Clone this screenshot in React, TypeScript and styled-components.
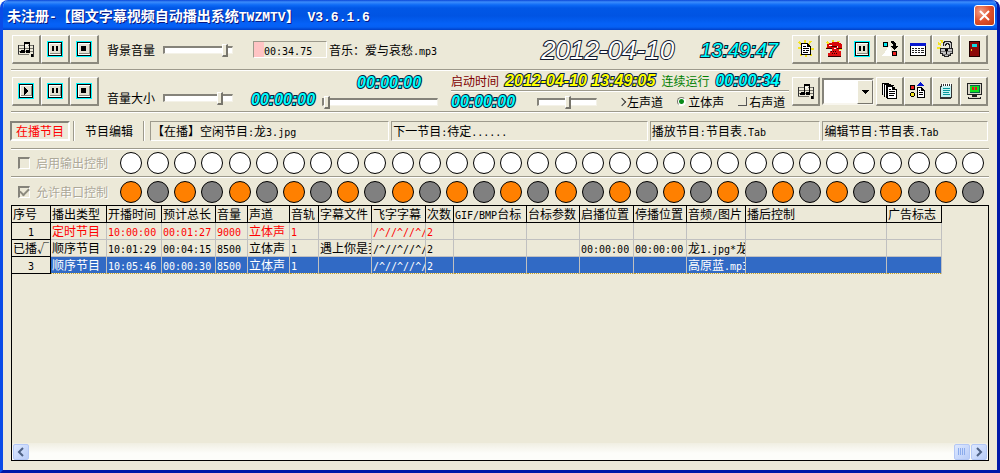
import React from "react";
import styled, { createGlobalStyle, css } from "styled-components";

const face = "#ece9d8";
const shade = "#9d9a8c";

const Global = createGlobalStyle`
  * { box-sizing: border-box; }
  html, body { margin: 0; padding: 0; background: #fff; }
  body, button, select, input, table {
    font-family: "Noto Sans CJK SC", sans-serif;
    font-size: 12px;
    line-height: 16px;
    color: #000;
  }
`;

/* ---------- window frame ---------- */

const Window = styled.div`
  min-height: 100vh;
  display: flex;
  flex-direction: column;
  overflow: hidden;
  background: ${face};
  border: solid #0a3fe0;
  border-width: 0 3px 3px;
  border-color: #0a3fe0 #0019a8 #0019a8 #0a4be8;
  border-radius: 8px 8px 0 0;
`;

const TitleBar = styled.header`
  height: 30px;
  flex: none;
  margin: 0 -3px;
  padding: 0 5px 0 7px;
  display: flex;
  align-items: center;
  justify-content: space-between;
  background: linear-gradient(
    #0a46d8 0, #3b8cfb 2px, #0d6af6 5px, #0157e6 8px, #0054e3 16px, #0562f8 24px, #0560f4 27px, #0040c8 30px
  );
`;

const Title = styled.h1`
  margin: 0;
  font-size: 14px;
  line-height: 20px;
  font-weight: 700;
  color: #fff;
  text-shadow: 1px 1px 0 #0a1883;
  white-space: pre;
`;

const CloseButton = styled.button`
  width: 21px;
  height: 21px;
  padding: 0;
  display: grid;
  place-items: center;
  border: 1px solid #fff;
  border-radius: 3px;
  background: radial-gradient(circle at 30% 30%, #f0a088, #e0502c 50%, #c03a14);
`;

const Client = styled.main`
  flex: 1;
  display: flex;
  flex-direction: column;
  padding: 0 8px 9px;
`;

/* ---------- shared parts ---------- */

const Latin = styled.span<{ $size: number }>`
  font-family: "DejaVu Sans Mono", monospace;
  font-size: ${(p) => p.$size}px;
  line-height: 0;
`;

const TitleLatin = styled(Latin)`
  font-family: "Liberation Mono", monospace;
`;

/* Sets half-width runs in a monospaced face, half as wide as a Chinese character. */
function Mixed({ text }: { text: string }) {
  const runs = text.split(/([\x20-\x7e]+)/).filter(Boolean);
  return (
    <>
      {runs.map((run, i) =>
        /^[\x20-\x7e]/.test(run) ? <Latin key={i} $size={10}>{run}</Latin> : run
      )}
    </>
  );
}

const Bar = styled.section<{ $height: number }>`
  height: ${(p) => p.$height}px;
  flex: none;
  display: flex;
  align-items: center;
  padding: 0 1px;
  white-space: nowrap;
`;

const Divider = styled.hr`
  flex: none;
  height: 2px;
  margin: 0;
  border: 0;
  border-top: 1px solid ${shade};
  border-bottom: 1px solid #fff;
`;

const Spacer = styled.div`
  flex: 1;
`;

const Buttons = styled.div`
  display: flex;
  align-items: center;
  flex: none;
`;

const ToolButton = styled.button<{ $width?: number }>`
  width: ${(p) => p.$width ?? 28}px;
  height: 29px;
  padding: 0;
  display: grid;
  place-items: center;
  background: ${face};
  border: solid;
  border-width: 1px 2px 2px 1px;
  border-color: #fff #8c8a7e #8c8a7e #fff;
`;

const Slider = styled.input.attrs({ type: "range" })<{ $width: number }>`
  appearance: none;
  flex: none;
  width: ${(p) => p.$width}px;
  height: 14px;
  margin: 0;
  background: transparent;
  &::-webkit-slider-runnable-track {
    height: 8px;
    background: #fff;
    border: 1px solid;
    border-width: 2px 1px 1px 2px;
    border-color: #85837a #f4f2e8 #f4f2e8 #85837a;
  }
  &::-webkit-slider-thumb {
    appearance: none;
    width: 6px;
    height: 13px;
    margin-top: -4px;
    background: ${face};
    border: solid;
    border-width: 1px 2px 2px 1px;
    border-color: #fff #77756c #77756c #fff;
  }
`;

const SliderLabel = styled.label<{ $drop?: boolean }>`
  display: flex;
  align-items: center;
  gap: 8px;
  margin-left: 8px;
  padding-top: ${(p) => (p.$drop ? 14 : 0)}px;
`;

const Clock = styled.output<{ $color?: string }>`
  font: italic 700 16px/18px "Liberation Sans", sans-serif;
  color: ${(p) => p.$color ?? "#00ffff"};
  -webkit-text-stroke: 2px #06203c;
  paint-order: stroke fill;
`;

/* ---------- top bar ---------- */

const Countdown = styled.div`
  width: 74px;
  height: 17px;
  flex: none;
  margin: 0 2px 0 20px;
  padding-left: 10px;
  line-height: 15px;
  border: 1px solid;
  border-color: ${shade} #fff #fff ${shade};
  background: linear-gradient(#ffc4c4, #ffc4c4) 0 0 / 10px 100% no-repeat;
`;

const BigDate = styled.time<{ $cyan?: boolean }>`
  font: italic 400 ${(p) => (p.$cyan ? 20 : 26)}px/30px "Liberation Sans", sans-serif;
  color: ${(p) => (p.$cyan ? "#00ffff" : "#fff")};
  -webkit-text-stroke: 2px #10182c;
  paint-order: stroke fill;
  white-space: pre;
  margin-right: ${(p) => (p.$cyan ? 14 : 26)}px;
`;

/* ---------- second bar ---------- */

const Elapsed = styled.div`
  margin-left: 18px;
  padding-top: 18px;
`;

const Position = styled.div`
  width: 116px;
  margin-left: 7px;
  display: flex;
  flex-direction: column;
  align-items: flex-end;
  gap: 3px;
  & > output { margin-right: 17px; }
`;

const Status = styled.div`
  flex: 1;
  margin: 0 3px 0 13px;
`;

const StatusLine = styled.div<{ $gap: number }>`
  height: 19px;
  display: flex;
  align-items: center;
  gap: ${(p) => p.$gap}px;
`;

const Tag = styled.span<{ $color: string }>`
  color: ${(p) => p.$color};
`;

const Channels = styled.fieldset`
  margin: 0;
  padding: 0;
  border: 0;
  display: flex;
  gap: 14px;
`;

const Channel = styled.label`
  display: flex;
  align-items: center;
  gap: 2px;
`;

const ChannelInput = styled.input.attrs({ type: "radio" })<{ $kind: "chevron" | "dot" | "corner" }>`
  appearance: none;
  margin: 0;
  flex: none;
  ${(p) =>
    p.$kind === "chevron" &&
    css`
      width: 6px;
      height: 6px;
      border: solid #333;
      border-width: 1px 1px 0 0;
      transform: rotate(45deg);
    `}
  ${(p) =>
    p.$kind === "dot" &&
    css`
      width: 9px;
      height: 9px;
      border-radius: 50%;
      border: 1px solid;
      border-color: #77756c #fff #fff #77756c;
      background: radial-gradient(circle, #0a8a1a 0 2px, #fff 3px);
    `}
  ${(p) =>
    p.$kind === "corner" &&
    css`
      width: 9px;
      height: 9px;
      border: solid #555;
      border-width: 0 1px 1px 0;
    `}
`;

const Combo = styled.div`
  position: relative;
  width: 52px;
  height: 27px;
  margin: 0 2px;
`;

const ComboSelect = styled.select`
  appearance: none;
  width: 100%;
  height: 100%;
  background: #fff;
  border: 2px solid;
  border-color: #85837a #f8f6ee #f8f6ee #85837a;
  border-radius: 0;
`;

const ComboArrow = styled.span`
  position: absolute;
  top: 2px;
  right: 1px;
  bottom: 1px;
  width: 16px;
  display: grid;
  place-items: center;
  pointer-events: none;
  background: ${face};
  border: 1px solid;
  border-color: #fff #77756c #77756c #fff;
`;

/* ---------- tabs and info fields ---------- */

const Tab = styled.button<{ $active?: boolean }>`
  height: 20px;
  padding: 0 5px;
  line-height: 16px;
  background: none;
  flex: none;
  border: 2px solid transparent;
  ${(p) =>
    p.$active &&
    css`
      margin-left: -2px;
      padding: 0 4px;
      color: #f00;
      border-color: #85837a #fff #fff #85837a;
    `}
`;

const TabRule = styled.span`
  width: 2px;
  height: 20px;
  margin: 0 3px;
  flex: none;
  border-left: 1px solid ${shade};
  border-right: 1px solid #fff;
`;

const Field = styled.div<{ $grow: number }>`
  flex: ${(p) => p.$grow} 1 0;
  min-width: 0;
  height: 20px;
  margin-left: 2px;
  padding: 0 1px;
  line-height: 18px;
  overflow: hidden;
  border: 1px solid;
  border-color: ${shade} #fff #fff ${shade};
`;

/* ---------- lamps ---------- */

const LampSwitch = styled.label`
  width: 102px;
  flex: none;
  margin-left: 6px;
  display: flex;
  align-items: center;
  gap: 6px;
  color: #aca899;
  text-shadow: 1px 1px 0 #fff;
`;

const LampCheck = styled.input.attrs({ type: "checkbox" })`
  appearance: none;
  flex: none;
  width: 12px;
  height: 12px;
  margin: 0;
  display: grid;
  place-items: center;
  border: 2px solid;
  border-width: 2px 1px 1px 2px;
  border-color: #85837a #fff #fff #85837a;
  &:checked::after {
    content: "";
    width: 7px;
    height: 4px;
    margin-top: -2px;
    border: solid #8c8a7e;
    border-width: 0 0 2px 2px;
    transform: rotate(-45deg);
  }
`;

const Lamps = styled.div`
  flex: 1;
  display: flex;
  justify-content: space-between;
  padding-right: 4px;
`;

const Lamp = styled.i<{ $color: string }>`
  width: 22px;
  height: 22px;
  border-radius: 50%;
  border: 1px solid #000;
  background: ${(p) => p.$color};
`;

/* ---------- grid ---------- */

const GridPanel = styled.section`
  flex: 1;
  min-height: 120px;
  display: flex;
  flex-direction: column;
  justify-content: space-between;
  overflow: hidden;
  border: 1px solid #000;
`;

const Grid = styled.table`
  table-layout: fixed;
  width: 930px;
  margin: -1px 0 0 -1px;
  border-collapse: collapse;
`;

const cell = css`
  height: 17px;
  padding: 0 0 0 1px;
  line-height: 16px;
  font-weight: 400;
  text-align: left;
  white-space: nowrap;
  overflow: hidden;
`;

const HeadCell = styled.th`
  ${cell}
  border: 1px solid #000;
`;

const RowHead = styled.th`
  ${cell}
  padding: 0;
  border: 1px solid #000;
  text-align: center;
`;

const Cell = styled.td`
  ${cell}
  border: 1px solid #c0c0c0;
`;

const Row = styled.tr<{ $tone?: "red" | "selected" }>`
  ${(p) => p.$tone === "red" && css`${Cell} { color: #f00; }`}
  ${(p) =>
    p.$tone === "selected" &&
    css`
      ${Cell} {
        color: #fff;
        background: #316ac5;
        border-top: 1px dotted #101830;
        border-bottom: 1px dotted #c8a020;
      }
    `}
`;

const ScrollBar = styled.div`
  height: 17px;
  flex: none;
  display: flex;
  align-items: center;
  padding: 0 1px;
  gap: 1px;
  background: linear-gradient(#f0eee2, #fdfdfa 60%);
`;

const ScrollButton = styled.button`
  width: 16px;
  height: 16px;
  padding: 0;
  display: grid;
  place-items: center;
  border: 1px solid #b4c8f6;
  border-radius: 2px;
  background: linear-gradient(135deg, #dde8ff, #b8ccf8);
`;

/* ---------- icons ---------- */

const Svg = ({ w = 18, h = 18, children }: { w?: number; h?: number; children: React.ReactNode }) => (
  <svg width={w} height={h} viewBox={`0 0 ${w} ${h}`} shapeRendering="crispEdges" aria-hidden="true">
    {children}
  </svg>
);

const MusicIcon = () => (
  <Svg>
    <path d="M1 5h16v1H1zM1 8h16v1H1zM1 11h16v1H1zM1 14h11v1H1z" fill="#77756c" />
    <path d="M1 5h1v9H1zM16 5h1v12h-1z" fill="#333" />
    <path d="M7 2h6v2H7zM7 3h1v8H7zM12 3h1v8h-1zM4 10h4v3H4zM9 10h4v3H9zM14 14h2v3h-2zM3 11h1v2H3z" fill="#000" />
    <path d="M8 5h3v1H8z" fill="#fff" />
  </Svg>
);

const MediaIcon = ({ kind }: { kind: "play" | "pause" | "stop" }) => (
  <Svg w={16} h={16}>
    <path d="M0 0h16v16H0z" fill="#00f8ff" />
    <path d="M1 1h14v14H1z" fill="#000" />
    <path d="M2 2h12v12H2z" fill="#fff" />
    <path d="M3 13h11V3h-1v9H3z" fill="#8c8a7e" />
    <path d="M3 3h10v9H3z" fill="#e4e1d2" />
    {kind === "play" && <path d="M6 4h1v8H6zM7 5h1v6H7zM8 6h1v4H8zM9 7h1v2H9z" fill="#000" />}
    {kind === "pause" && <path d="M5 5h2v5H5zM9 5h2v5H9z" fill="#000" />}
    {kind === "stop" && <path d="M5 5h5v5H5z" fill="#000" />}
  </Svg>
);

const Rays = () => (
  <path
    d="M2 2l4 4M8 0v4M14 1l-3 4M1 8h4M17 9h-4M3 16l4-4M15 16l-3-3M9 17v-3"
    stroke="#f4e420"
    strokeWidth="2"
    fill="none"
  />
);

const PageIcon = () => (
  <Svg>
    <Rays />
    <path d="M4 3h7v1h1v1h1v1h1v9H4z" fill="#000" />
    <path d="M5 4h5v3h3v7H5z" fill="#fff" />
    <path d="M6 6h3v1H6zM6 8h6v1H6zM6 10h2v1H6zM9 10h3v1H9zM6 12h5v1H6z" fill="#000" />
  </Svg>
);

const PhoneIcon = () => (
  <Svg>
    <Rays />
    <path d="M2 4h2V3h3V2h7v1h2v1h1v4h-4V6H7v2H2z" fill="#d80808" />
    <path d="M1 8h6v1H1zM12 8h5v1h-5zM6 6h6v1H6z" fill="#400" />
    <path d="M7 7h5v2h2v2h2v6H3v-4h2v-2h2z" fill="#e01010" />
    <path d="M3 16h13v1H3zM6 11h1v1H6zM8 11h1v1H8zM10 11h1v1h-1zM7 13h1v1H7zM9 13h1v1H9zM11 13h1v1h-1z" fill="#300" />
    <path d="M4 5h3v1H4zM9 8h2v1H9z" fill="#fff" />
  </Svg>
);

const SwapIcon = () => (
  <Svg>
    <path d="M9 5L1 16h10z" fill="#fff" />
    <path d="M2 2h5v5H2zM11 11h5v5h-5z" fill="#000" />
    <path d="M3 3h3v3H3z" fill="#00e8f0" />
    <path d="M12 12h3v3h-3z" fill="#f02020" />
    <path d="M10 1h3v1h1v1h1v3h2v1h-1v1h-1v1h-1v1h-1V9h-1V8h-1V7h-1V6h2V4h-1V3h-1z" fill="#000" />
  </Svg>
);

const SheetIcon = () => (
  <Svg>
    <path d="M1 3h16v13H1z" fill="#000" />
    <path d="M1 3h16v3H1z" fill="#0818d0" />
    <path d="M2 6h14v9H2z" fill="#fff" />
    <path
      d="M3 8h2v1H3zM6 8h2v1H6zM9 8h2v1H9zM12 8h3v1h-3zM3 10h2v1H3zM6 10h2v1H6zM9 10h2v1H9zM12 10h3v1h-3zM3 12h2v1H3zM6 12h2v1H6zM9 12h2v1H9zM12 12h3v1h-3z"
      fill="#222"
    />
  </Svg>
);

const LockIcon = () => (
  <Svg>
    <path d="M1 3l3 2M0 8h4M4 0l2 3" stroke="#f4e420" strokeWidth="2" />
    <path d="M7 6V3h1V2h4v1h1v6" stroke="#222" strokeWidth="3" fill="none" />
    <path d="M7 6V3h1V2h4v1h1v6" stroke="#ccc" strokeWidth="1" fill="none" />
    <path d="M3 8h13v6h-2v2h-2v1H7v-1H5v-2H3z" fill="#222" />
    <path d="M4 9h11v4h-2v2h-2v1H8v-1H6v-2H4z" fill="#c4c4c4" />
    <path d="M4 11h11v1H4zM6 14h7v1H6z" fill="#777" />
    <path d="M8 9h3v2h-1v3H9v-3H8z" fill="#000" />
  </Svg>
);

const DoorIcon = () => (
  <Svg>
    <path d="M4 1h11v16H4z" fill="#200" />
    <path d="M5 2h9v14H5z" fill="#8c0808" />
    <path d="M7 4h5v3H7z" fill="#10d8e0" />
    <path d="M6 9h1v2H6z" fill="#f0c020" />
  </Svg>
);

const PagesIcon = () => (
  <Svg>
    <path d="M1 1h7v1H2v11H1zM3 2h7v1H4v12H3zM5 3h8v1H6v12H5z" fill="#000" />
    <path d="M2 2h1v10H2zM4 3h1v11H4z" fill="#fff" />
    <path d="M6 4h6v1h2v2h2v10H6z" fill="#000" />
    <path d="M7 5h4v3h4v8H7z" fill="#fff" />
    <path d="M8 7h2v1H8zM8 9h6v1H8zM8 11h6v1H8zM8 13h5v1H8z" fill="#000" />
  </Svg>
);

const ShapesIcon = () => (
  <Svg>
    <path d="M11 0h1v1h1v1h1v1h1v1H8V3h1V2h1V1h1z" fill="#0818d0" />
    <path d="M1 3h5v5H1zM2 10h3v1h1v3H5v1H2v-1H1v-3h1z" fill="#000" />
    <path d="M2 4h3v3H2z" fill="#f02020" />
    <path d="M2 11h3v3H2z" fill="#f4e420" />
    <path d="M8 5h5v1h1v1h1v1h1v8H8z" fill="#000" />
    <path d="M9 6h3v3h3v6H9z" fill="#fff" />
    <path d="M10 8h1v1h-1zM10 10h4v1h-4zM10 12h4v1h-4z" fill="#000" />
  </Svg>
);

const NotepadIcon = () => (
  <Svg>
    <path d="M4 2h11v14h-1v1H3V4h1z" fill="#333" />
    <path d="M5 4h9v11H4V5h1z" fill="#c8f4f4" />
    <path d="M5 1h1v3H5zM7 1h1v3H7zM9 1h1v3H9zM11 1h1v3h-1zM13 1h1v3h-1z" fill="#fff" />
    <path d="M6 6h7v1H6zM6 8h7v1H6zM6 10h6v1H6zM6 12h7v1H6z" fill="#08989c" />
  </Svg>
);

const MonitorIcon = () => (
  <Svg>
    <path d="M2 1h15v12H2z" fill="#222" />
    <path d="M3 2h13v10H3z" fill="#d8d5c8" />
    <path d="M5 3h10v8H5z" fill="#064" />
    <path d="M5 4h9v6H5z" fill="#10e020" />
    <path d="M7 5h2v3H7zM10 5h2v3h-2z" fill="#e01818" />
    <path d="M7 13h5v2H7zM3 15h13v2H3z" fill="#222" />
    <path d="M4 15h11v1H4z" fill="#d8d5c8" />
  </Svg>
);

/* ---------- data ---------- */

const columns: [string, number][] = [
  ["序号", 39], ["播出类型", 56], ["开播时间", 55], ["预计总长", 54], ["音量", 32], ["声道", 42],
  ["音轨", 29], ["字幕文件", 53], ["飞字字幕", 54], ["次数", 28], ["GIF/BMP台标", 73], ["台标参数", 53],
  ["启播位置", 54], ["停播位置", 53], ["音频/图片", 59], ["播后控制", 141], ["广告标志", 55],
];

const rows: { tone?: "red" | "selected"; cells: string[] }[] = [
  {
    tone: "red",
    cells: ["1", "定时节目", "10:00:00", "00:01:27", "9000", "立体声", "1", "", "/^//^//^/", "2", "", "", "", "", "", "", ""],
  },
  {
    cells: ["已播√", "顺序节目", "10:01:29", "00:04:15", "8500", "立体声", "1", "遇上你是我", "/^//^//^/", "2", "", "",
      "00:00:00", "00:00:00", "龙1.jpg*龙", "", ""],
  },
  {
    tone: "selected",
    cells: ["3", "顺序节目", "10:05:46", "00:00:30", "8500", "立体声", "1", "", "/^//^//^/", "2", "", "", "", "",
      "高原蓝.mp3", "", ""],
  },
];

const lamps = Array.from({ length: 32 }, (_, i) => i);

export default function App() {
  return (
    <>
      <Global />
      <Window>
        <TitleBar>
          <Title>
            未注册<TitleLatin $size={13}>-</TitleLatin>【图文字幕视频自动播出系统
            <TitleLatin $size={13}>TWZMTV</TitleLatin>】<TitleLatin $size={13}> V3.6.1.6</TitleLatin>
          </Title>
          <CloseButton aria-label="关闭">
            <svg width="13" height="13" viewBox="0 0 13 13" aria-hidden="true">
              <path d="M2 2l9 9M11 2l-9 9" stroke="#fff" strokeWidth="2" />
            </svg>
          </CloseButton>
        </TitleBar>

        <Client>
          <Bar $height={39}>
            <Buttons>
              <ToolButton $width={29} aria-label="音乐"><MusicIcon /></ToolButton>
              <ToolButton $width={29} aria-label="暂停"><MediaIcon kind="pause" /></ToolButton>
              <ToolButton $width={29} aria-label="停止"><MediaIcon kind="stop" /></ToolButton>
            </Buttons>
            <SliderLabel>
              背景音量
              <Slider $width={70} defaultValue={94} />
            </SliderLabel>
            <Countdown><Mixed text="00:34.75" /></Countdown>
            <span><Mixed text="音乐：爱与哀愁.mp3" /></span>
            <Spacer />
            <BigDate>2012-04-10</BigDate>
            <BigDate $cyan>13:49:47</BigDate>
            <Buttons>
              <ToolButton aria-label="新建"><PageIcon /></ToolButton>
              <ToolButton aria-label="电话"><PhoneIcon /></ToolButton>
              <ToolButton aria-label="暂停"><MediaIcon kind="pause" /></ToolButton>
              <ToolButton aria-label="切换"><SwapIcon /></ToolButton>
              <ToolButton aria-label="节目表"><SheetIcon /></ToolButton>
              <ToolButton aria-label="锁定"><LockIcon /></ToolButton>
              <ToolButton aria-label="退出"><DoorIcon /></ToolButton>
            </Buttons>
          </Bar>
          <Divider />

          <Bar $height={40}>
            <Buttons>
              <ToolButton $width={29} aria-label="播放"><MediaIcon kind="play" /></ToolButton>
              <ToolButton $width={29} aria-label="暂停"><MediaIcon kind="pause" /></ToolButton>
              <ToolButton $width={29} aria-label="停止"><MediaIcon kind="stop" /></ToolButton>
            </Buttons>
            <SliderLabel $drop>
              音量大小
              <Slider $width={70} defaultValue={86} />
            </SliderLabel>
            <Elapsed><Clock>00:00:00</Clock></Elapsed>
            <Position>
              <Clock>00:00:00</Clock>
              <Slider $width={116} defaultValue={0} aria-label="播放进度" />
            </Position>
            <Status>
              <StatusLine $gap={6}>
                <Tag $color="#800000">启动时间</Tag>
                <Clock $color="#ffff00">2012-04-10 13:49:05</Clock>
                <Tag $color="#008000">连续运行</Tag>
                <Clock>00:00:34</Clock>
              </StatusLine>
              <Divider />
              <StatusLine $gap={22}>
                <Clock>00:00:00</Clock>
                <Slider $width={60} defaultValue={50} aria-label="声道平衡" />
                <Channels>
                  <Channel><ChannelInput $kind="chevron" name="channel" />左声道</Channel>
                  <Channel><ChannelInput $kind="dot" name="channel" defaultChecked />立体声</Channel>
                  <Channel><ChannelInput $kind="corner" name="channel" />右声道</Channel>
                </Channels>
              </StatusLine>
            </Status>
            <Buttons>
              <ToolButton aria-label="音乐"><MusicIcon /></ToolButton>
              <Combo>
                <ComboSelect aria-label="曲目"><option /></ComboSelect>
                <ComboArrow>
                  <Svg w={7} h={4}><path d="M0 0h7v1H0zM1 1h5v1H1zM2 2h3v1H2zM3 3h1v1H3z" fill="#000" /></Svg>
                </ComboArrow>
              </Combo>
              <ToolButton aria-label="复制"><PagesIcon /></ToolButton>
              <ToolButton aria-label="图形"><ShapesIcon /></ToolButton>
              <ToolButton aria-label="记事本"><NotepadIcon /></ToolButton>
              <ToolButton aria-label="显示器"><MonitorIcon /></ToolButton>
            </Buttons>
          </Bar>
          <Divider />

          <Bar $height={35}>
            <Tab $active>在播节目</Tab>
            <TabRule />
            <Tab>节目编辑</Tab>
            <TabRule />
            <Field $grow={240}><Mixed text="【在播】空闲节目:龙3.jpg" /></Field>
            <Field $grow={258}><Mixed text="下一节目:待定......" /></Field>
            <Field $grow={170}><Mixed text="播放节目:节目表.Tab" /></Field>
            <Field $grow={165}><Mixed text="编辑节目:节目表.Tab" /></Field>
          </Bar>
          <Divider />

          <Bar $height={26}>
            <LampSwitch><LampCheck disabled />启用输出控制</LampSwitch>
            <Lamps>{lamps.map((i) => <Lamp key={i} $color="#fff" />)}</Lamps>
          </Bar>
          <Divider />
          <Bar $height={27}>
            <LampSwitch><LampCheck disabled defaultChecked />允许串口控制</LampSwitch>
            <Lamps>{lamps.map((i) => <Lamp key={i} $color={i % 2 ? "#808080" : "#ff8000"} />)}</Lamps>
          </Bar>

          <GridPanel>
            <Grid>
              <colgroup>{columns.map(([name, width]) => <col key={name} width={width} />)}</colgroup>
              <thead>
                <tr>{columns.map(([name]) => <HeadCell key={name} scope="col"><Mixed text={name} /></HeadCell>)}</tr>
              </thead>
              <tbody>
                {rows.map((row, r) => (
                  <Row key={r} $tone={row.tone}>
                    <RowHead scope="row"><Mixed text={row.cells[0]} /></RowHead>
                    {row.cells.slice(1).map((text, c) => <Cell key={c}><Mixed text={text} /></Cell>)}
                  </Row>
                ))}
              </tbody>
            </Grid>
            <ScrollBar>
              <ScrollButton aria-label="向左">
                <svg width="8" height="10" viewBox="0 0 8 10" aria-hidden="true">
                  <path d="M6 1L2 5l4 4" stroke="#4d6185" strokeWidth="2" fill="none" />
                </svg>
              </ScrollButton>
              <Spacer />
              <ScrollButton aria-label="滚动">
                <Svg w={8} h={7}><path d="M0 0h1v7H0zM2 0h1v7H2zM4 0h1v7H4zM6 0h1v7H6z" fill="#8cacec" /></Svg>
              </ScrollButton>
              <ScrollButton aria-label="向右">
                <svg width="8" height="10" viewBox="0 0 8 10" aria-hidden="true">
                  <path d="M2 1l4 4-4 4" stroke="#4d6185" strokeWidth="2" fill="none" />
                </svg>
              </ScrollButton>
            </ScrollBar>
          </GridPanel>
        </Client>
      </Window>
    </>
  );
}
